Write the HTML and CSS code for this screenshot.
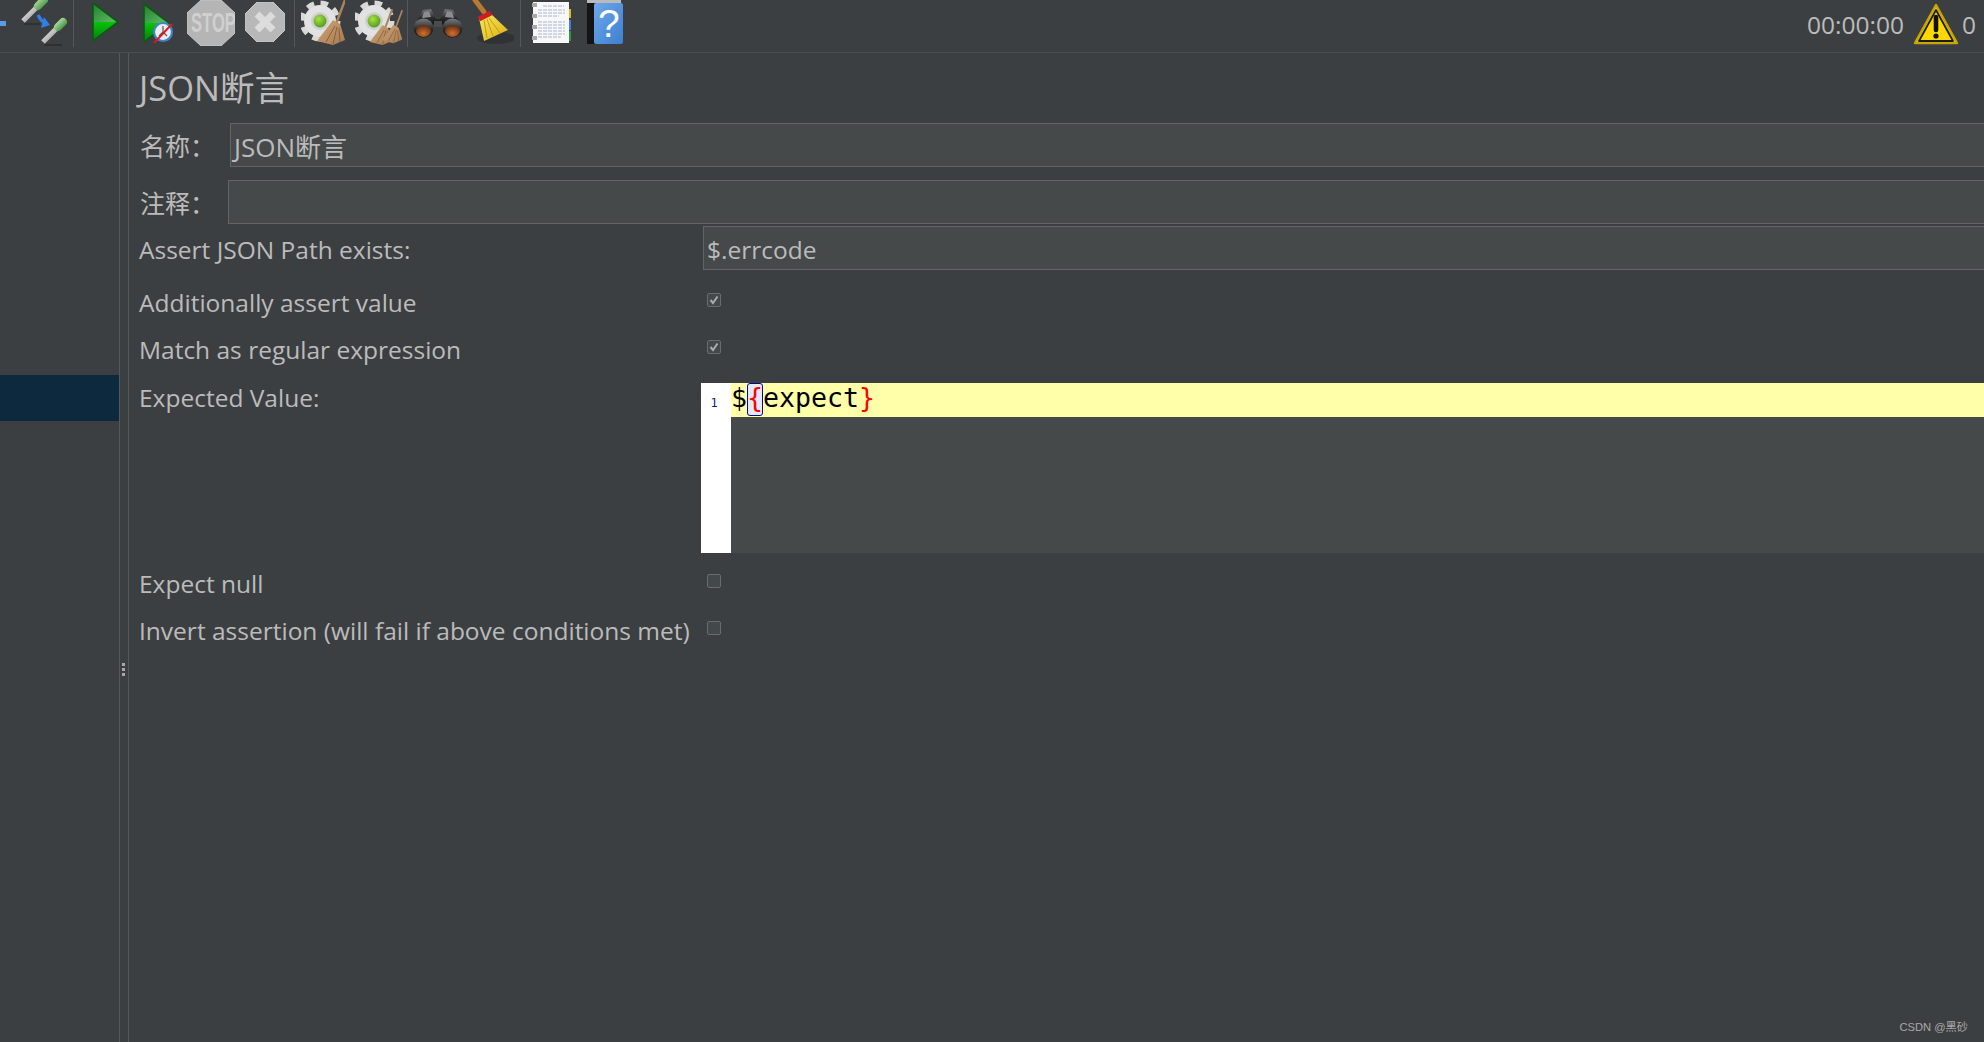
FILE: index.html
```html
<!DOCTYPE html>
<html lang="zh">
<head>
<meta charset="utf-8">
<title>JSON断言</title>
<link rel="stylesheet" href="styles.css">
</head>
<body>
<svg class="defs" width="0" height="0">
  <defs>
    <linearGradient id="gTop" x1="0" y1="0" x2="1" y2="1"><stop offset="0" stop-color="#1f7f2c"/><stop offset="1" stop-color="#62bd68"/></linearGradient>
    <linearGradient id="gBot" x1="0" y1="0" x2="0" y2="1"><stop offset="0" stop-color="#08c408"/><stop offset="1" stop-color="#067a12"/></linearGradient>
    <linearGradient id="tube" x1="0" y1="0" x2="1" y2="1"><stop offset="0" stop-color="#f2f2f2"/><stop offset="1" stop-color="#8d8d8d"/></linearGradient>
    <linearGradient id="bulb" x1="0" y1="0" x2="1" y2="1"><stop offset="0" stop-color="#a5d79a"/><stop offset="1" stop-color="#4f9a4c"/></linearGradient>
    <linearGradient id="straw" x1="0" y1="0" x2="1" y2="1"><stop offset="0" stop-color="#d0a578"/><stop offset="1" stop-color="#a67a4e"/></linearGradient>
    <linearGradient id="yellow" x1="0" y1="0" x2="1" y2="1"><stop offset="0" stop-color="#f8ea62"/><stop offset="1" stop-color="#dcae12"/></linearGradient>
    <linearGradient id="barrel" x1="0" y1="0" x2="0" y2="1"><stop offset="0" stop-color="#77797b"/><stop offset=".55" stop-color="#2b2b2c"/><stop offset="1" stop-color="#111"/></linearGradient>
    <radialGradient id="ball" cx=".4" cy=".35" r=".7"><stop offset="0" stop-color="#a8e04a"/><stop offset="1" stop-color="#4e9a18"/></radialGradient>
    <radialGradient id="lens" cx=".5" cy=".7" r=".7"><stop offset="0" stop-color="#d0702e"/><stop offset="1" stop-color="#5e2b12"/></radialGradient>
    <linearGradient id="blue" x1="0" y1="0" x2="1" y2="1"><stop offset="0" stop-color="#6fa8ea"/><stop offset="1" stop-color="#3d7fd0"/></linearGradient>
    <symbol id="gear" viewBox="0 0 44 46">
      <circle cx="19" cy="21" r="18" fill="none" stroke="#d9d9d9" stroke-width="5" stroke-dasharray="7.6 6.54"/>
      <circle cx="19" cy="21" r="16" fill="#e2e2e2"/>
      <circle cx="19" cy="21" r="9" fill="#cfcfcf"/>
      <circle cx="19" cy="21" r="6.5" fill="url(#ball)"/>
    </symbol>
    <symbol id="broomlet" viewBox="0 0 30 46">
      <path d="M29 0 20 24" stroke="#a8845c" stroke-width="2.400" fill="none"/>
      <path d="M17 20 24 24 29 40 17 45 1 41Z" fill="url(#straw)"/>
      <path d="M19 26 10 42M21 27 17 44M23 28 24 42" stroke="#7a5533" stroke-width=".8" fill="none"/>
    </symbol>
  </defs>
</svg>

<header class="toolbar">
  <span class="sliver"></span>
  <svg class="icon pipettes" viewBox="0 0 48 46" width="48" height="46">
    <path d="M4 24H20M24 45H42" stroke="#2e3032" stroke-width="2"/>
    <path d="M3 21 17 7" stroke="url(#tube)" stroke-width="5"/>
    <path d="M18 6 24 0" stroke="url(#bulb)" stroke-width="8" stroke-linecap="round"/>
    <path d="M23 42 37 28" stroke="url(#tube)" stroke-width="5"/>
    <path d="M38 27 43 22" stroke="url(#bulb)" stroke-width="8" stroke-linecap="round"/>
    <path d="M18 15 C21 21 24 23 27 23" stroke="#2f7fe6" stroke-width="3.400" fill="none"/>
    <path d="M24 17 30 25 21 28Z" fill="#2f7fe6"/>
  </svg>
  <span class="sep"></span>
  <svg class="icon play" viewBox="0 0 27 40" width="27" height="40">
    <path d="M1 1 26 20H1Z" fill="url(#gTop)"/>
    <path d="M1 20H26L1 39Z" fill="url(#gBot)"/>
    <path d="M1 1 26 20 1 39Z" fill="none" stroke="#0c5a14" stroke-width="1.600" stroke-linejoin="round"/>
  </svg>
  <svg class="icon play-nt" viewBox="0 0 32 40" width="32" height="40">
    <path d="M1 1 26 20H1Z" fill="url(#gTop)"/>
    <path d="M1 20H26L1 39Z" fill="url(#gBot)"/>
    <path d="M1 1 26 20 1 39Z" fill="none" stroke="#0c5a14" stroke-width="1.600" stroke-linejoin="round"/>
    <circle cx="20" cy="29" r="9" fill="#e9eef4" stroke="#3f82c8" stroke-width="2.200"/>
    <path d="M20 23V29L24 33M20 29 16 33" stroke="#555" stroke-width="1.200" fill="none"/>
    <path d="M11 40 29 21" stroke="#e8141c" stroke-width="2"/>
  </svg>
  <svg class="icon stop" viewBox="0 0 48 46" width="48" height="46">
    <path d="M14 0H34L48 13V33L34 46H14L0 33V13Z" fill="#b5b5b5" stroke="#c6c6c6" stroke-width="1"/>
    <text class="stop-text" transform="translate(4 32) scale(.615 1)">STOP</text>
  </svg>
  <svg class="icon shutdown" viewBox="0 0 40 40" width="40" height="40">
    <path d="M12 0H28L40 12V28L28 40H12L0 28V12Z" fill="#b8b8b8" stroke="#c8c8c8" stroke-width="1"/>
    <path d="M12 12 28 28M28 12 12 28" stroke="#dcdcdc" stroke-width="7"/>
  </svg>
  <span class="sep"></span>
  <svg class="icon gearb" viewBox="0 0 44 46" width="44" height="46">
    <use href="#gear" width="44" height="46"/>
    <use href="#broomlet" x="15" y="0" width="30" height="46"/>
  </svg>
  <svg class="icon gearbb" viewBox="0 0 48 46" width="48" height="46">
    <use href="#gear" width="44" height="46"/>
    <use href="#broomlet" x="14" y="9" width="24" height="37"/>
    <use href="#broomlet" x="26" y="9" width="22" height="36"/>
  </svg>
  <span class="sep"></span>
  <svg class="icon binoc" viewBox="0 0 50 30" width="50" height="30">
    <path d="M10 1 18 0 23 10H27L32 0 40 1 47 14 30 16 28 14H22L20 16 3 14Z" fill="url(#barrel)"/>
    <path d="M11 3 16 2 18 8 9 9Z M34 2 39 3 41 9 32 8Z" fill="#8a8c8e"/>
    <ellipse cx="10.500" cy="19" rx="10" ry="9.500" fill="url(#barrel)"/>
    <ellipse cx="39.500" cy="19" rx="10" ry="9.500" fill="url(#barrel)"/>
    <rect x="21" y="12" width="8" height="6" fill="#4a4b4d"/>
    <ellipse cx="10.500" cy="22" rx="7.500" ry="6" fill="url(#lens)"/>
    <ellipse cx="39.500" cy="22" rx="7.500" ry="6" fill="url(#lens)"/>
  </svg>
  <svg class="icon broom" viewBox="0 0 42 46" width="42" height="46">
    <ellipse cx="24" cy="38" rx="19" ry="6" fill="#303234"/>
    <path d="M3 0 12 12" stroke="#b87a2e" stroke-width="5" stroke-linecap="round"/>
    <path d="M7 18 18 13 36 30 12 41Z" fill="url(#yellow)"/>
    <path d="M12 20 15 38M15 19 21 36M17 18 28 33" stroke="#c9980d" stroke-width="1" fill="none"/>
    <path d="M7 19 19 13" stroke="#d01c24" stroke-width="5"/>
  </svg>
  <span class="sep"></span>
  <svg class="icon logv" viewBox="0 0 42 44" width="42" height="44">
    <rect x="37" y="9" width="3" height="9" fill="#e6b422"/>
    <rect x="37" y="20" width="3" height="10" fill="#3f7fe0"/>
    <rect x="37" y="31" width="3" height="10" fill="#2a9a34"/>
    <rect x="2" y="2" width="36" height="41" fill="#f8f8f8"/>
    <path d="M12 6H33M7 10H34M7 13H34M7 16H28M7 22H34M7 25H34M7 28H34M7 31H34M7 34H34M7 37H30" stroke="#a3b6cd" stroke-width="1.200" stroke-dasharray="4 1"/>
    <path d="M1 5H6M1 16H6M1 27H6M1 38H6" stroke="#a8a8a8" stroke-width="4"/>
  </svg>
  <svg class="icon helpb" viewBox="0 0 38 46" width="38" height="46">
    <rect x="1" y="0" width="34" height="4" fill="#b8babc"/>
    <rect x="1" y="3" width="9" height="41" fill="#141414"/>
    <rect x="8" y="3" width="29" height="41" rx="2" fill="url(#blue)"/>
    <text class="help-text" x="12" y="37">?</text>
  </svg>
  <div class="status">
    <span class="timer">00:00:00</span>
    <svg class="warn" viewBox="0 0 46 42" width="46" height="42">
      <path d="M23 2 44 40H2Z" fill="#ffd800" stroke="#c8a600" stroke-width="2.400" stroke-linejoin="round"/>
      <path d="M23 7 40 38H6Z" fill="none" stroke="#1c1c1c" stroke-width="1.800" stroke-linejoin="round"/>
      <path d="M23 14V27" stroke="#111" stroke-width="4.600" stroke-linecap="round"/>
      <circle cx="23" cy="33" r="2.600" fill="#111"/>
    </svg>
    <span class="count">0</span>
  </div>
</header>

<div class="main">
  <aside class="tree"><div class="tree-sel"></div></aside>
  <div class="split"><span class="grip"></span></div>
  <main class="content">
    <h1 class="title">JSON断言</h1>
    <div class="row name-row">
      <label class="cjk-label name-label">名称：</label>
      <div class="field name-field">JSON断言</div>
    </div>
    <div class="row comment-row">
      <label class="cjk-label comment-label">注释：</label>
      <div class="field"></div>
    </div>
    <div class="row path-row">
      <label class="label">Assert JSON Path exists:</label>
      <div class="field path-field">$.errcode</div>
    </div>
    <div class="row check-row">
      <label class="label">Additionally assert value</label>
      <span class="check"><svg viewBox="0 0 14 14" width="14" height="14"><path d="M3.500 7 6 10 10.500 3.500" fill="none" stroke="#a9abad" stroke-width="2"/></svg></span>
    </div>
    <div class="row check-row">
      <label class="label">Match as regular expression</label>
      <span class="check"><svg viewBox="0 0 14 14" width="14" height="14"><path d="M3.500 7 6 10 10.500 3.500" fill="none" stroke="#a9abad" stroke-width="2"/></svg></span>
    </div>
    <div class="row editor-row">
      <label class="label editor-label">Expected Value:</label>
      <div class="editor">
        <div class="gutter"><span class="lineno">1</span></div>
        <div class="code"><div class="line">$<span class="brace match">{</span>expect<span class="brace">}</span></div></div>
      </div>
    </div>
    <div class="row check-row null-row">
      <label class="label">Expect null</label>
      <span class="check"></span>
    </div>
    <div class="row check-row">
      <label class="label">Invert assertion (will fail if above conditions met)</label>
      <span class="check"></span>
    </div>
  </main>
</div>
<div class="watermark">CSDN @黑砂</div>
</body>
</html>
```

FILE: styles.css
```css
* { box-sizing: border-box; }
html, body { margin: 0; height: 100%; }
body {
  width: 1984px;
  height: 1042px;
  overflow: hidden;
  position: relative;
  display: flex;
  flex-direction: column;
  background: #3c3f41;
  color: #bbbbbb;
  font-family: "Open Sans", "Noto Sans CJK SC", sans-serif;
  font-size: 24.5px;
}
.defs { position: absolute; }

.toolbar {
  flex: 0 0 53px;
  display: flex;
  align-items: flex-start;
  border-bottom: 1px solid #4a4c4e;
}
.sliver { width: 6px; height: 5px; margin-top: 21px; background: #5b9be6; }
.icon { display: block; flex: none; }
.sep { flex: none; width: 1px; height: 47px; background: #55585a; }
.pipettes { margin: 0 5px 0 14px; }
.play { margin: 2px 0 0 18px; }
.play-nt { margin: 3px 0 0 24px; }
.stop { margin-left: 12px; }
.shutdown { margin: 2px 9px 0 10px; }
.gearb { margin-left: 6px; }
.gearbb { margin: 0 4px 0 10px; }
.binoc { margin: 9px 0 0 5px; }
.broom { margin: 0 6px 0 9px; }
.logv { margin: 0 12px 0 10px; }
.helpb { margin-left: 1px; }
.stop-text { font: 700 27px "Liberation Sans", sans-serif; fill: #d0d0d0; }
.help-text { font: 400 39px "Liberation Sans", sans-serif; fill: #ffffff; }
.status { margin-left: auto; display: flex; align-items: center; height: 48px; padding-right: 8px; }
.warn { margin: 0 3px 0 9px; }

.main { flex: 1; display: flex; min-height: 0; }
.tree { flex: 0 0 119px; padding-top: 322px; }
.tree-sel { height: 46px; background: #0d293e; }
.split {
  flex: 0 0 10px;
  position: relative;
  border-left: 1px solid #55585a;
  border-right: 1px solid #55585a;
}
.grip {
  position: absolute;
  left: 2px;
  top: 610px;
  width: 3px;
  height: 13px;
  background: repeating-linear-gradient(#a8a8a8 0 3px, transparent 3px 5px);
}
.content { flex: 1; min-width: 0; padding: 14px 0 0 10px; overflow: hidden; }
.title { margin: 0 0 15px; height: 41px; line-height: 42px; font-size: 34.5px; font-weight: 400; }

.row { display: flex; align-items: center; }
.label { flex: 0 0 562px; white-space: nowrap; }
.cjk-label { white-space: nowrap; font-size: 25px; line-height: 46px; height: 44px; font-family: "Open Sans", "Noto Sans CJK TC", sans-serif; }
.name-label { flex: 0 0 91px; padding-left: 1px; }
.comment-label { flex: 0 0 89px; padding-left: 1px; }
.field {
  flex: 1;
  margin-right: -10px;
  height: 44px;
  line-height: 46px;
  padding-left: 3px;
  background: #45494a;
  border: 1px solid #646464;
}
.name-field { font-size: 26px; }
.comment-row { margin-top: 13px; }
.path-row { margin-top: 2px; align-items: flex-start; }
.path-row .label { height: 44px; line-height: 47px; }
.path-field { margin-left: 2px; }
.check-row { height: 47px; }
.path-row + .check-row { margin-top: 9px; }
.check {
  width: 14px;
  height: 14px;
  margin: -6px 0 0 6px;
  border: 1px solid #6b6b6b;
  border-radius: 2px;
  background: #43484a;
}
.check svg { display: block; margin: -1px; }
.editor-row { align-items: flex-start; margin-top: 10px; }
.editor-label { line-height: 29px; }
.editor { flex: 1; height: 170px; display: flex; background: #45494a; }
.gutter {
  flex: 0 0 30px;
  background: #fff;
  padding: 10px 4px 0 0;
  text-align: center;
}
.lineno { display: block; font: 12px/20px "DejaVu Sans Mono", monospace; color: #1c1c80; }
.code { flex: 1; }
.line {
  height: 34px;
  background: #ffffaa;
  color: #000;
  font: 26.6px/30px "DejaVu Sans Mono", monospace;
}
.brace { color: #f00; display: inline-block; }
.match {
  background: #e4e8fa;
  outline: 1px solid #0a0a80;
  outline-offset: -1px;
  border-radius: 3px;
  height: 33px;
}
.null-row { margin-top: 7px; }

.watermark {
  position: absolute;
  right: 16px;
  bottom: 8px;
  font: 11.2px "Liberation Sans", "Noto Sans CJK SC", sans-serif;
  color: #a8a8a8;
}
```
